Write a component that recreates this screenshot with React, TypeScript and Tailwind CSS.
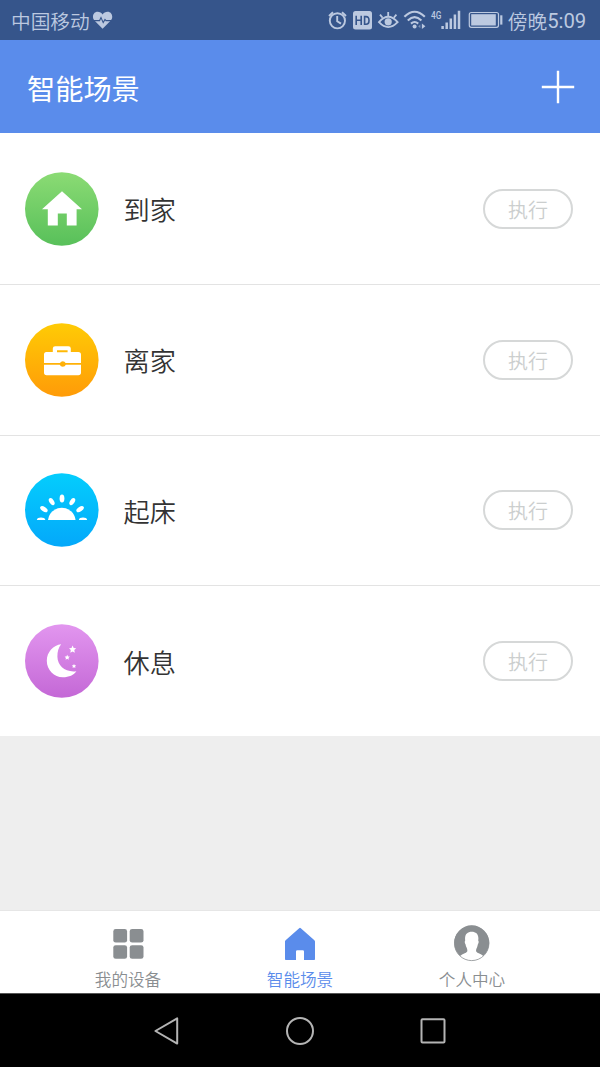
import type { ReactNode } from 'react'
import clsx from 'clsx'

interface Scene {
  id: string
  name: string
  from: string
  to: string
  glyph: ReactNode
}

const scenes: Scene[] = [
  {
    id: 'home',
    name: '到家',
    from: '#8bdb74',
    to: '#58c05a',
    glyph: <path d="M37 19.2 57 37.2H51.6V53.4H41.8V41.4H32.8V53.4H22.8V37.2H17Z" />,
  },
  {
    id: 'leave',
    name: '离家',
    from: '#ffcb05',
    to: '#ff9b08',
    glyph: (
      <>
        <path
          fillRule="evenodd"
          d="M21.3 29H27.8V25.6Q27.8 23.2 30.2 23.2H43.4Q45.8 23.2 45.8 25.6V29H53.3Q56 29 56 31.7V39.9H40.6A3.2 3.2 0 0 0 35 39.9H19V31.7Q19 29 21.3 29ZM32 27.2V29.2H42.6V27.2Z"
        />
        <path d="M19 41.7H34.8A3.2 3.2 0 0 0 40.8 41.7H56V49.6Q56 52.2 53.3 52.2H21.6Q19 52.2 19 49.6Z" />
      </>
    ),
  },
  {
    id: 'wake',
    name: '起床',
    from: '#04cdfd',
    to: '#04a8fa',
    glyph: (
      <>
        <path d="M23 47A13.9 13.9 0 0 1 50.6 47Z" />
        <ellipse cx="37" cy="25.6" rx="2.4" ry="4" />
        <ellipse cx="26.7" cy="28.6" rx="2.3" ry="4" transform="rotate(-32 26.7 28.6)" />
        <ellipse cx="47.3" cy="28.6" rx="2.3" ry="4" transform="rotate(32 47.3 28.6)" />
        <ellipse cx="18.9" cy="36.1" rx="2.3" ry="4.2" transform="rotate(-56 18.9 36.1)" />
        <ellipse cx="55.1" cy="36.1" rx="2.3" ry="4.2" transform="rotate(56 55.1 36.1)" />
        <path d="M11.8 47Q12.4 44.6 16 44.6T20.4 47ZM53.8 47Q54.4 44.6 58 44.6T62.2 47Z" />
      </>
    ),
  },
  {
    id: 'rest',
    name: '休息',
    from: '#e296ef',
    to: '#c468d6',
    glyph: (
      <>
        <path d="M36.2 20.3C28.4 21.2 21.8 28 21.8 36.7C21.8 46 29.2 53.2 37.8 53.2C44 53.2 49 51 51.4 47.2C40.4 48.6 32.6 42 32.4 32.8C32.3 27.6 33.6 23.6 36.2 20.3Z" />
        <path d="m47.6 21.6 1.1 2.4 2.5.3-1.9 1.8.5 2.6-2.2-1.3-2.3 1.3.5-2.6-1.8-1.8 2.5-.3ZM42.2 30.8l.8 1.6 1.8.2-1.3 1.3.3 1.8-1.6-.9-1.6.9.3-1.8-1.3-1.3 1.8-.2ZM49 40l.7 1.3 1.5.2-1.1 1 .3 1.5-1.4-.8-1.4.8.3-1.5-1.1-1 1.5-.2Z" />
      </>
    ),
  },
]

function SceneIcon({ scene }: { scene: Scene }) {
  const gradient = `scene-${scene.id}`
  return (
    <svg viewBox="0 0 74 74" className="size-[74px] shrink-0" fill="#fff">
      <defs>
        <linearGradient id={gradient} x1="0" y1="0" x2="0" y2="1">
          <stop offset="0" stopColor={scene.from} />
          <stop offset="1" stopColor={scene.to} />
        </linearGradient>
      </defs>
      <circle cx="36.8" cy="37" r="36.8" fill={`url(#${gradient})`} />
      {scene.glyph}
    </svg>
  )
}

function StatusBar() {
  return (
    <div className="flex h-10 shrink-0 items-center bg-[#36558b] pl-[11px] text-[#bcc9e0]">
      <span className="pt-px text-[19.7px] leading-none">中国移动</span>
      <svg viewBox="92 10 22 20" className="ml-0.5 h-5 w-[22px]" fill="currentColor">
        <path d="M102.6 28.8 94.4 20.4C91.4 17 93.4 11.8 97.6 11.8C99.8 11.8 101.4 12.8 102.6 14.6C103.8 12.8 105.4 11.8 107.6 11.8C111.8 11.8 113.8 17 110.8 20.4Z" />
        <path d="M93 20.6H99.6L101 17.6L103.2 22.6L105 19.4L106 20.6H112" fill="none" stroke="#36558b" strokeWidth="1.1" />
      </svg>
      <svg viewBox="326 6 180 28" className="ml-[212px] h-7 w-[180px]" fill="none" stroke="currentColor">
        {/* alarm */}
        <circle cx="337.4" cy="20.8" r="7.6" strokeWidth="1.9" />
        <path d="M337.2 16V21.2L341 23.6M329 16 333 12.2M342 12.2 346 16" strokeWidth="1.9" />
        {/* hd */}
        <rect x="353" y="11" width="19" height="18.6" rx="2.5" fill="currentColor" stroke="none" />
        <path d="M356.2 15.8V25M361.2 15.8V25M356.2 20.3H361.2M364.6 16.6V24.2H366Q369 24.2 369 20.4T366 16.6Z" stroke="#36558b" strokeWidth="1.6" />
        {/* eye */}
        <path d="M379 22.2Q388.2 11.4 397.6 22.2Q388.2 32 379 22.2Z" strokeWidth="1.9" />
        <path d="M388.2 12V16M380 14.6 382.6 17.8M396.4 14.6 393.8 17.8" strokeWidth="1.8" />
        <circle cx="388.2" cy="21.8" r="3.6" fill="currentColor" stroke="none" />
        {/* wifi */}
        <path d="M404.4 16.8Q414.6 6.6 424.8 16.8M407.8 20.4Q414.6 13.8 421.4 20.4M411 23.6Q414.6 20.4 418.2 23.6" strokeWidth="2.1" />
        <circle cx="414.6" cy="26.6" r="2" fill="currentColor" stroke="none" />
        <path d="M421.9 23.4 425.4 26.2 421.9 29Z" fill="currentColor" stroke="none" />
        <path d="M420.4 24.4V28.2L418.2 26.2Z" fill="currentColor" stroke="none" opacity=".5" />
        <text
          x="431"
          y="19"
          textLength="10.4"
          lengthAdjust="spacingAndGlyphs"
          className="font-[Roboto] text-[11px] font-medium"
          fill="currentColor"
          stroke="none"
        >
          4G
        </text>
        {/* signal */}
        <path d="M442.6 26V29M446.7 22.6V29M450.8 18.6V29M454.9 14.6V29M459 10.8V29" strokeWidth="2.5" />
        {/* battery */}
        <rect x="469.3" y="12.5" width="29.2" height="14.8" rx="2" strokeWidth="1.2" />
        <rect x="471.2" y="14.2" width="24.6" height="11.3" fill="currentColor" stroke="none" />
        <path d="M501.3 15.3V24.6" strokeWidth="2.2" />
      </svg>
      <span className="ml-0.5 flex items-center pt-0.5 leading-none">
        <span className="text-[19.7px]">傍晚</span>
        <span className="font-[Roboto] text-[20.3px] font-normal">5:09</span>
      </span>
    </div>
  )
}

function Header() {
  return (
    <header className="flex h-[93px] shrink-0 items-center justify-between bg-[#5a8ceb] pr-[25px] pl-[27px] text-white">
      <h1 className="pt-[3px] text-[28.2px] leading-none font-normal">智能场景</h1>
      <button aria-label="添加" className="size-[34px]">
        <svg viewBox="0 0 34 34" className="size-[34px]" stroke="currentColor" strokeWidth="2.4">
          <path d="M17 .8V33.2M.8 17H33.2" />
        </svg>
      </button>
    </header>
  )
}

function SceneRow({ scene, first }: { scene: Scene; first: boolean }) {
  return (
    <li
      className={clsx(
        'flex h-[150.75px] items-center border-t pr-[27px] pl-[24.5px]',
        first ? 'border-white' : 'border-[#e3e3e3]',
      )}
    >
      <SceneIcon scene={scene} />
      <span className="ml-[25px] flex-1 pt-px text-[26.2px] leading-none text-[#333]">{scene.name}</span>
      <button className="flex h-10 w-[90px] items-center justify-center rounded-full border-2 border-[#d6d8d8] pt-0.5 text-[20px] leading-none text-[#cbcece]">
        执行
      </button>
    </li>
  )
}

function Tab({ label, active, children }: { label: string; active?: boolean; children: ReactNode }) {
  return (
    <button
      className={clsx(
        'flex w-[172px] flex-col items-center pt-3.5 text-[16.6px] leading-none',
        active ? 'text-[#5a8ceb]' : 'text-[#8a8e91]',
      )}
    >
      <svg viewBox="0 0 38 38" className="size-[38px]" fill="currentColor">
        {children}
      </svg>
      <span className="mt-2">{label}</span>
    </button>
  )
}

function TabBar() {
  return (
    <nav className="flex h-[83px] shrink-0 justify-center border-t border-[#e6e6e6] bg-white">
      <Tab label="我的设备">
        <rect x="4.3" y="4" width="13.8" height="13.6" rx="2.4" />
        <rect x="20.7" y="4" width="13.8" height="13.6" rx="2.4" />
        <rect x="4.3" y="20.2" width="13.8" height="13.6" rx="2.4" />
        <rect x="20.7" y="20.2" width="13.8" height="13.6" rx="2.4" />
      </Tab>
      <Tab label="智能场景" active>
        <path d="M18.2 3.2Q19 2.5 19.8 3.2L33.4 15.3Q34 15.9 34 16.6V34.2Q34 35 33.2 35H23V26.4Q23 25.2 21.8 25.2H16.3Q15 25.2 15 26.4V35H4.8Q4 35 4 34.2V16.6Q4 15.9 4.6 15.3Z" />
      </Tab>
      <Tab label="个人中心">
        <circle cx="18.7" cy="18.4" r="17.2" fill="#fff" stroke="currentColor" strokeWidth=".8" />
        <path d="M7.1 30.9A17.5 17.5 0 1 1 30.3 30.9C27.8 28.8 24.4 28.6 23.2 26.6C22.8 25.4 23.2 24 24 22.6C24.4 21.6 24.6 20.4 24.8 19.4C26 17.8 25.8 16.4 25.2 15.4C26.2 9.6 23.2 6.8 18.7 6.8C14.2 6.8 11.4 9.6 12.2 15.4C11.6 16.4 11.5 17.8 12.6 19.4C12.8 20.6 13 21.6 13.6 22.6C14.2 24 14.6 25.4 14.2 26.6C13 28.6 9.6 28.8 7.1 30.9Z" />
      </Tab>
    </nav>
  )
}

function SystemNav() {
  return (
    <div className="flex h-[74px] shrink-0 items-center justify-center gap-[105px] border-t border-[#555] bg-black text-[#b4b4b4]">
      <svg viewBox="0 0 28 28" className="size-7" fill="none" stroke="currentColor" strokeWidth="2" strokeLinejoin="round">
        <path d="M2.4 14 24.2 1.4V26.6Z" />
      </svg>
      <svg viewBox="0 0 28 28" className="size-7" fill="none" stroke="currentColor" strokeWidth="2">
        <circle cx="14" cy="14" r="13" />
      </svg>
      <svg viewBox="0 0 28 28" className="size-7" fill="none" stroke="currentColor" strokeWidth="2">
        <rect x="2.5" y="2.2" width="23" height="23.4" rx="1" />
      </svg>
    </div>
  )
}

export default function App() {
  return (
    <div className="flex h-[1067px] w-[600px] flex-col overflow-hidden bg-[#eeeeee] font-['Noto_Sans_CJK_SC',sans-serif] font-[350]">
      <StatusBar />
      <Header />
      <ul className="bg-white">
        {scenes.map((scene, i) => (
          <SceneRow key={scene.id} scene={scene} first={i === 0} />
        ))}
      </ul>
      <div className="flex-1" />
      <TabBar />
      <SystemNav />
    </div>
  )
}
